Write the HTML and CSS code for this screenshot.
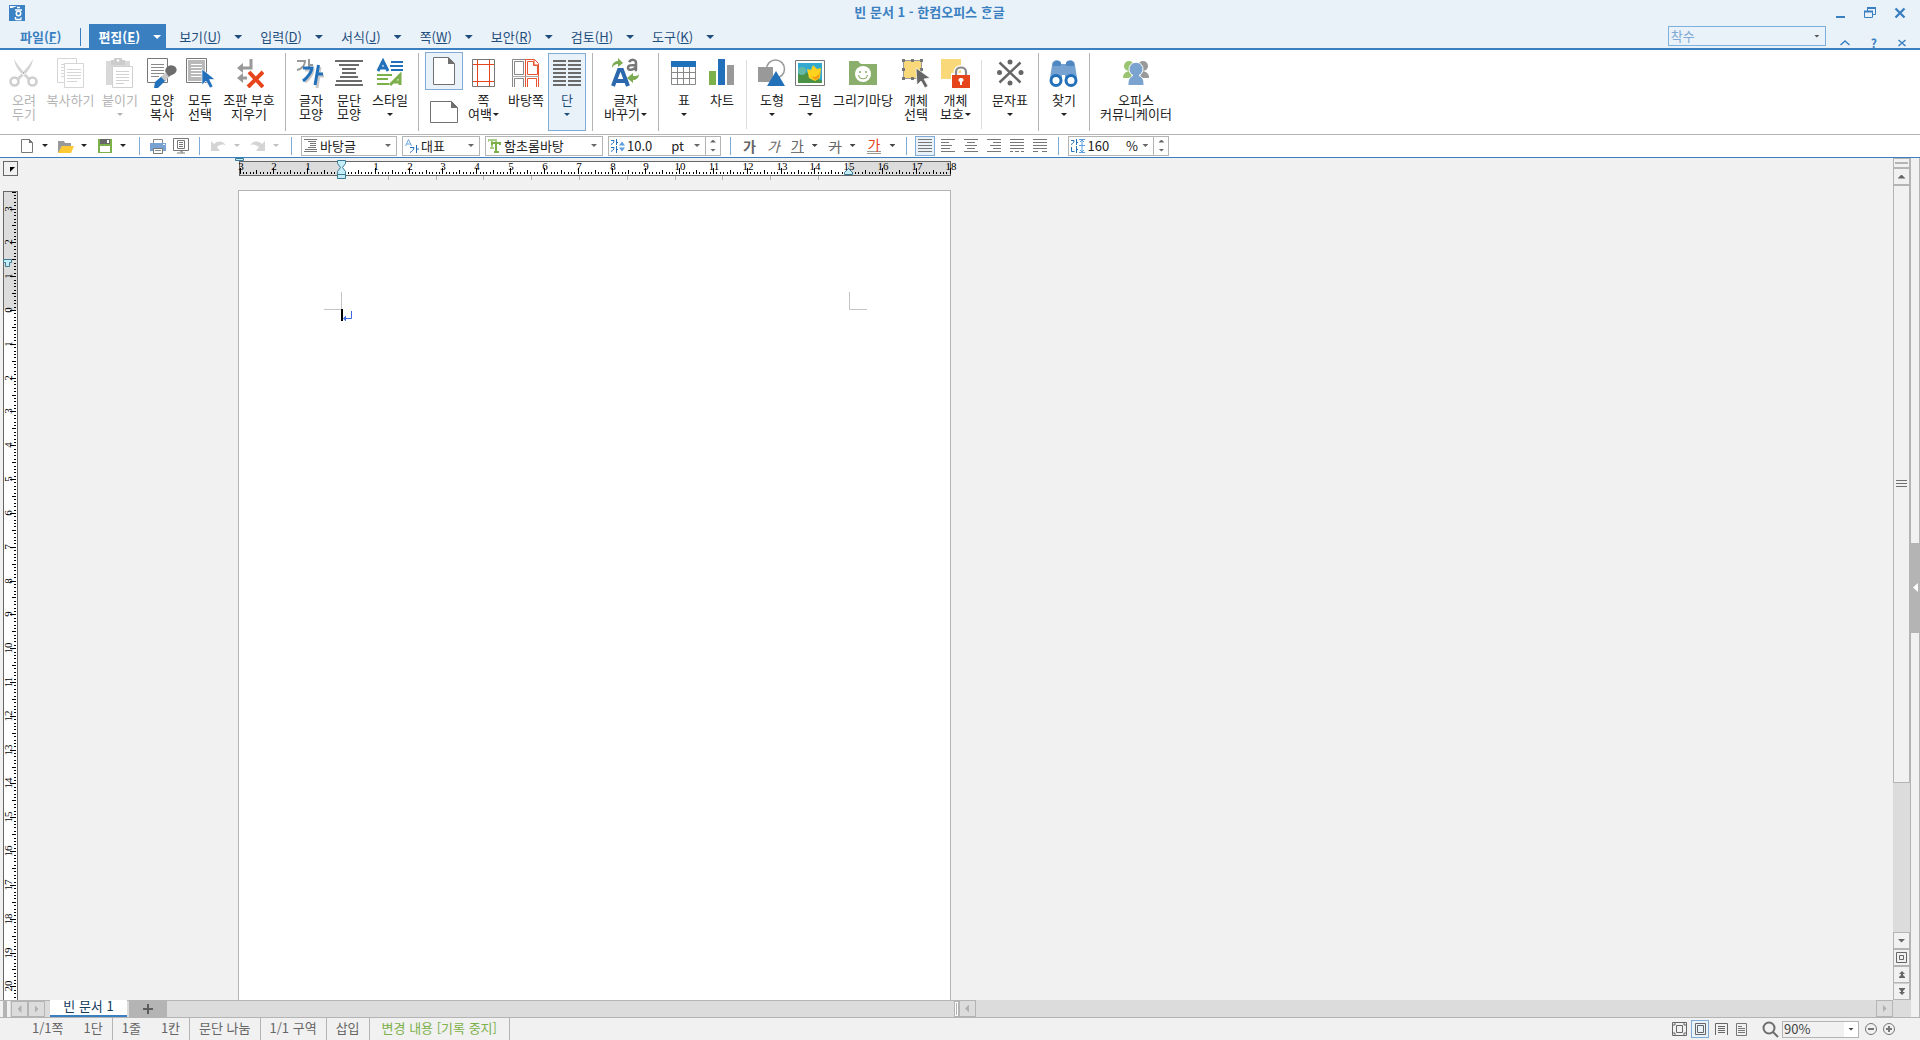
FILE: index.html
```html
<!DOCTYPE html>
<html lang="ko">
<head>
    <meta charset="UTF-8">
    <meta name="viewport" content="width=device-width, initial-scale=1.0">
    <title>빈 문서 1 - 한컴오피스 ᄒᆞᆫ글</title>
    <link rel="stylesheet" href="styles.css">
</head>
<body>

<header class="titlebar">
    <svg class="logo" width="16" height="16" viewBox="0 0 16 16">
        <rect width="16" height="16" fill="#3b82c4"/>
        <path d="M1 1h7l-5 2H1z" fill="#fff"/>
        <path d="M8 2.500h3M6 5h7M6.500 14.500h6M6.500 12v2.500" stroke="#fff" stroke-width="1.500" fill="none"/>
        <circle cx="9.500" cy="8.500" r="2.200" stroke="#fff" stroke-width="1.500" fill="none"/>
        <path d="M12 12v2" stroke="#fff"/>
    </svg>
    <h1>빈 문서 1 - 한컴오피스 ᄒᆞᆫ글</h1>
    <div class="window-buttons">
        <button type="button" aria-label="최소화"><svg width="12" height="12"><path d="M2 10h9" stroke="#3a80c1" stroke-width="2"/></svg></button>
        <button type="button" aria-label="이전 크기로"><svg width="12" height="12" fill="none" stroke="#3a80c1"><path d="M3.500 4V1.500h8v6H9"/><path d="M3 1h9" stroke-width="2"/><path d="M.5 4.500h8v6h-8z"/><path d="M0 4.500h9" stroke-width="2"/></svg></button>
        <button type="button" aria-label="닫기"><svg width="12" height="12"><path d="M1.500 1.500l9 9M10.500 1.500l-9 9" stroke="#3a80c1" stroke-width="2.400"/></svg></button>
    </div>
</header>

<nav class="menubar">
    <button type="button" class="file">파일(<u>F</u>)</button>
    <button type="button" class="menu active">편집(<u>E</u>)<i class="arrow big"></i></button>
    <button type="button" class="menu">보기(<u>U</u>)<i class="arrow big"></i></button>
    <button type="button" class="menu">입력(<u>D</u>)<i class="arrow big"></i></button>
    <button type="button" class="menu">서식(<u>J</u>)<i class="arrow big"></i></button>
    <button type="button" class="menu">쪽(<u>W</u>)<i class="arrow big"></i></button>
    <button type="button" class="menu">보안(<u>R</u>)<i class="arrow big"></i></button>
    <button type="button" class="menu">검토(<u>H</u>)<i class="arrow big"></i></button>
    <button type="button" class="menu">도구(<u>K</u>)<i class="arrow big"></i></button>
    <div class="find">
        <input type="text" placeholder="착수" aria-label="찾을 내용">
        <i class="arrow"></i>
    </div>
    <div class="help-buttons">
        <button type="button" aria-label="메뉴 접기"><svg width="12" height="10"><path d="M1.500 7L6 3l4.500 4" stroke="#3a80c1" stroke-width="1.500" fill="none"/></svg></button>
        <button type="button" aria-label="도움말">?</button>
        <button type="button" aria-label="문서 닫기"><svg width="10" height="10"><path d="M1.500 2l7 6M8.500 2l-7 6" stroke="#3a80c1" stroke-width="1.500"/></svg></button>
    </div>
</nav>

<div class="ribbon">
    <button type="button" class="tool w40" disabled>
        <svg width="30" height="30" viewBox="0 0 30 30"><path d="M5 1c1 7 4 11 9 16l5 5 2-2-5-5C11 10 8 6 5 1zM24 1c-1 7-4 11-9 16l-5 5-2-2 5-5c5-5 8-9 11-14z" fill="#d4d4d4"/><circle cx="5.500" cy="23.500" r="4" fill="none" stroke="#cfcfcf" stroke-width="2.600"/><circle cx="23.500" cy="23.500" r="4" fill="none" stroke="#cfcfcf" stroke-width="2.600"/><circle cx="14.500" cy="15" r="1" fill="#aaa"/></svg>
        <span>오려<br>두기</span>
    </button>
    <button type="button" class="tool w53" disabled>
        <svg width="30" height="30" viewBox="0 0 30 30" fill="#fff" stroke="#d6d6d6"><path d="M1.500.5h19v24h-19z"/><path d="M5 6.500h4M5 9.500h4M5 12.500h4M5 15.500h4M5 18.500h4"/><path d="M8.500 5.500h19v24h-19z"/><path d="M11 11.500h14M11 14.500h14M11 17.500h14M11 20.500h14M11 23.500h10"/></svg>
        <span>복사하기</span>
    </button>
    <button type="button" class="tool w46" disabled>
        <svg width="30" height="30" viewBox="0 0 30 30"><path d="M1 3h24v24H1z" fill="#d9d9d9"/><path d="M6 2h3a4 4 0 0 1 8 0h3v5H6z" fill="#ccc"/><circle cx="13" cy="2.500" r="1.200" fill="#fff"/><path d="M7.500 8.500h20v21h-20z" fill="#fff" stroke="#d0d0d0"/><path d="M11 13.500h13M11 16.500h13M11 19.500h13M11 22.500h13M11 25.500h8" stroke="#d0d0d0"/></svg>
        <span>붙이기</span><i class="arrow"></i>
    </button>
    <button type="button" class="tool w38">
        <svg width="30" height="30" viewBox="0 0 30 30"><path d="M.5.5h20v24H.5z" fill="#fff" stroke="#777"/><path d="M4 6.500h13M4 9.500h13M4 12.500h13M4 15.500h13M4 18.500h8" stroke="#8a8a8a"/><path d="M7 30l1-6 7-6 4 4-8 8z" fill="#2270ba"/><path d="M14 19l5-5 4 4-5 5z" fill="#c8c8c8"/><path d="M18 13c1-5 5-7 9-5s3 6 0 8-4 1-5 3z" fill="#6d6d6d"/></svg>
        <span>모양<br>복사</span>
    </button>
    <button type="button" class="tool w38">
        <svg width="30" height="30" viewBox="0 0 30 30"><path d="M1.500.5h20v24h-20z" fill="#fff" stroke="#777"/><path d="M3 2h17v21H3z" fill="#b9b9b9"/><path d="M6 6.500h11M6 9.500h11M6 12.500h11M6 15.500h11M6 18.500h10" stroke="#fff"/><path d="M17 11v16l4-4 4 7 3-1.500-3.500-7h5.500z" fill="#2270ba" stroke="#fff" stroke-width=".6"/></svg>
        <span>모두<br>선택</span>
    </button>
    <button type="button" class="tool w60">
        <svg width="30" height="30" viewBox="0 0 30 30" fill="none"><path d="M17 1v9H7M7 20h6" stroke="#999" stroke-width="3"/><path d="M9 5v10l-6-5zM9 15v10l-6-5z" fill="#999"/><path d="M15 14l14 15M29 14L14 29" stroke="#e6451c" stroke-width="4"/></svg>
        <span>조판 부호<br>지우기</span>
    </button>
    <div class="split"></div>
    <button type="button" class="tool w38">
        <svg width="30" height="30" viewBox="0 0 30 30" fill="none"><path d="M1 3h8c0 4-3 8-8 9M13 1v12M13 7h4" stroke="#999" stroke-width="2"/><g stroke="#c9c9c9" stroke-width="3"><path d="M9 12h8c-1 6-4 9-8 12M24 9l-3 21M22 18h6"/></g><g stroke="#2270ba" stroke-width="3"><path d="M7 10h9c-1 6-4 9-9 13M22.500 7l-3.500 20M21 16h6"/></g></svg>
        <span>글자<br>모양</span>
    </button>
    <button type="button" class="tool w38">
        <svg width="30" height="30" viewBox="0 0 30 30" stroke="#6b6b6b" stroke-width="2"><path d="M1 3h28M5 7h20M8 11h14M8 15h14M6 19h18M2 23h26M1 27h28"/></svg>
        <span>문단<br>모양</span>
    </button>
    <button type="button" class="tool w44">
        <svg width="30" height="30" viewBox="0 0 30 30" fill="none"><g stroke="#2270ba"><path d="M3 13L8 3l5 10M5 10h7" stroke-width="3"/><path d="M16 4h12M15 8h13M16 12h12" stroke-width="2"/></g><g stroke="#7cb04a"><path d="M2 17h15M2 21h11M2 26h12" stroke-width="2"/><path d="M15 27l10-10v10M18 24h7" stroke-width="3"/></g></svg>
        <span>스타일</span><i class="arrow"></i>
    </button>
    <div class="split"></div>
    <div class="orientation">
        <button type="button" class="portrait" aria-label="세로"><svg width="22" height="28"><path d="M.5.5h15l6 6v21H.5z" fill="#fff" stroke="#707070"/><path d="M15 0v7h7z" fill="#707070"/></svg></button>
        <button type="button" class="landscape" aria-label="가로"><svg width="28" height="22"><path d="M.5.5h21l6 6v15H.5z" fill="#fff" stroke="#707070"/><path d="M21 0v7h7z" fill="#707070"/></svg></button>
    </div>
    <button type="button" class="tool w41">
        <svg width="30" height="30" viewBox="0 0 30 30" fill="none"><path d="M3.500 1.500h22v27h-22z" stroke="#777"/><path d="M8.500 2v26M20.500 2v26M4 6.500h21M4 23.500h21" stroke="#e6451c"/></svg>
        <span>쪽<br>여백<i class="arrow"></i></span>
    </button>
    <button type="button" class="tool w44">
        <svg width="30" height="30" viewBox="0 0 30 30" fill="none"><path d="M1.500 29V1.500h13V29M3.500 3.500h9v13h-9zM3.500 29v-8.500h9V29" stroke="#888"/><path d="M14.500 29V1.500h9l4 4V29M16.500 3.500h6v4h4v9h-10zM16.500 29v-8.500h9V29M23 2v5h5" stroke="#e6552f"/><path d="M1 18.500h27" stroke="#aaa"/></svg>
        <span>바탕쪽</span>
    </button>
    <button type="button" class="tool w38 on">
        <svg width="30" height="30" viewBox="0 0 30 30" stroke="#6b6b6b" stroke-width="2"><path d="M1 3h13M1 7h13M1 11h13M1 15h13M1 19h13M1 23h13M1 27h13M16 3h13M16 7h13M16 11h13M16 15h13M16 19h13M16 23h13M16 27h13"/></svg>
        <span>단</span><i class="arrow"></i>
    </button>
    <div class="split"></div>
    <button type="button" class="tool w53">
        <svg width="30" height="30" viewBox="0 0 30 30" fill="none"><path d="M2 28l6-16h3l6 16M5 23h9" stroke="#2b68ad" stroke-width="4"/><path d="M1 10c0-5 3-7 6-7V0l5 5-5 4V6C4 6 3 7 1 10zM28 16c0 4-3 6-6 6v3l-6-5 6-5v3c3 0 5 0 6-2z" fill="#7caa50"/><path d="M18 4c2-3 7-3 7 1v7h1M25 7c-5 0-8 0-8 3s6 2 8-1" stroke="#777" stroke-width="2.500"/></svg>
        <span>글자<br>바꾸기<i class="arrow"></i></span>
    </button>
    <div class="split"></div>
    <button type="button" class="tool w38">
        <svg width="30" height="30" viewBox="0 0 30 30" fill="none"><path d="M2.500 8v18.500h24V8M3 14.500h23M3 20.500h23M8.500 9v17M14.500 9v17M20.500 9v17" stroke="#888"/><path d="M2 3h25v6H2z" fill="#2270ba"/></svg>
        <span>표</span><i class="arrow"></i>
    </button>
    <button type="button" class="tool w38">
        <svg width="30" height="30" viewBox="0 0 30 30"><path d="M2 13h7v14H2z" fill="#7cb04a"/><path d="M11 1h7v26h-7z" fill="#2270ba"/><path d="M20 7h7v20h-7z" fill="#999"/></svg>
        <span>차트</span>
    </button>
    <div class="split light"></div>
    <button type="button" class="tool w38">
        <svg width="30" height="30" viewBox="0 0 30 30"><circle cx="18.500" cy="11" r="9" fill="#fff" stroke="#999" stroke-width="1.500"/><path d="M1 9h15v15H1z" fill="#999"/><path d="M19 13l9 15H10z" fill="#2270ba"/></svg>
        <span>도형</span><i class="arrow"></i>
    </button>
    <button type="button" class="tool w38">
        <svg width="30" height="30" viewBox="0 0 30 30"><path d="M.5 2.500h29v25H.5z" fill="#fff" stroke="#777"/><path d="M3 5h24v20H3z" fill="#31a9cf"/><path d="M3 16l6-3 18 10v2H3z" fill="#4b9146"/><circle cx="7" cy="13" r="4" fill="#62b9a5"/><path d="M12 11l4 1 2-5 4 4 4-1-1 10-5 3-6-3z" fill="#ffd21e"/><path d="M16 18c3 2 7 1 9-4l-1 6-4 2z" fill="#f39b13"/></svg>
        <span>그림</span><i class="arrow"></i>
    </button>
    <button type="button" class="tool w68">
        <svg width="30" height="30" viewBox="0 0 30 30"><path d="M1 3h9l3 3h16v21H1z" fill="#8aae6c"/><circle cx="15" cy="16" r="8" fill="#fff"/><circle cx="12" cy="14" r="1" fill="#8aae6c"/><circle cx="18" cy="14" r="1" fill="#8aae6c"/><path d="M10.500 17c1 5 8 5 9 0" fill="none" stroke="#8aae6c" stroke-width="1.200"/></svg>
        <span>그리기마당</span>
    </button>
    <button type="button" class="tool w38">
        <svg width="30" height="30" viewBox="0 0 30 30"><path d="M2.500 2.500h18v18h-18z" fill="#f8d878" stroke="#999"/><path d="M1 1h3v3H1zM10 1h3v3h-3zM19 1h3v3h-3zM1 10h3v3H1zM1 19h3v3H1zM10 19h3v3h-3zM19 10h3v3h-3z" fill="#777"/><path d="M15 10l14 10-6 1 4 7-3 2-4-7-4 4z" fill="#666" stroke="#fff" stroke-width=".7"/></svg>
        <span>개체<br>선택</span>
    </button>
    <button type="button" class="tool w41">
        <svg width="30" height="30" viewBox="0 0 30 30"><path d="M0 1h20v20H0z" fill="#f8d878"/><path d="M10 15h20v15H10z" fill="#fff"/><path d="M15 17v-3c0-6 10-6 10 0v3" fill="none" stroke="#fff" stroke-width="5"/><path d="M15 17v-3c0-6 10-6 10 0v3" fill="none" stroke="#888" stroke-width="2.200"/><path d="M11 17h18v13H11z" fill="#e6451c"/><path d="M20 20a2 2 0 0 1 1 4v3h-2v-3a2 2 0 0 1 1-4z" fill="#fff"/></svg>
        <span>개체<br>보호<i class="arrow"></i></span>
    </button>
    <div class="split light"></div>
    <button type="button" class="tool w44">
        <svg width="30" height="30" viewBox="0 0 30 30"><path d="M4.500 4.500l21 20M25.500 4.500l-21 20" stroke="#666" stroke-width="2.500"/><g fill="#666"><circle cx="15" cy="4" r="2.500"/><circle cx="15" cy="25" r="2.500"/><circle cx="4.500" cy="14.500" r="2.500"/><circle cx="26" cy="14.500" r="2.500"/></g></svg>
        <span>문자표</span><i class="arrow"></i>
    </button>
    <div class="split"></div>
    <button type="button" class="tool w38">
        <svg width="30" height="30" viewBox="0 0 30 30"><path d="M3 7c0-6 9-6 9-1h5c0-5 9-5 9 1l2 13H16v-3h-3v3H1z" fill="#75a2d1"/><path d="M4 6c1-4 7-4 8-1v3H4zM17 5c1-3 7-3 8 1v2h-8z" fill="#4f87c2"/><circle cx="7" cy="22.500" r="5" fill="#fff" stroke="#2270ba" stroke-width="3"/><circle cx="22" cy="22.500" r="5" fill="#fff" stroke="#2270ba" stroke-width="3"/></svg>
        <span>찾기</span><i class="arrow"></i>
    </button>
    <div class="split"></div>
    <button type="button" class="tool w80">
        <svg width="30" height="30" viewBox="0 0 30 30"><g fill="#9ac472"><circle cx="8" cy="8" r="5"/><path d="M2 20c0-4 2-6 6-7l4 7z"/></g><g fill="#999"><circle cx="22" cy="8" r="5"/><path d="M28 20c0-4-2-6-6-7l-4 7z"/></g><g fill="#7aa3d0" stroke="#fff"><path d="M7 27.500c0-6 1-8 5-10a7 7 0 1 1 6 0c4 2 5 4 5 10z"/></g></svg>
        <span>오피스<br>커뮤니케이터</span>
    </button>
</div>

<div class="toolbar">
    <div class="group files">
        <button type="button" aria-label="새 문서"><svg width="16" height="16"><path d="M2.500 1.500h8l3 3v10h-11z" fill="#fff" stroke="#777"/><path d="M10 1v4h4z" fill="#777"/></svg><i class="arrow"></i></button>
        <button type="button" aria-label="불러오기"><svg width="16" height="16"><path d="M0 3h6l1 2h6v3H4l-3 7H0z" fill="#999"/><path d="M4 8h12l-3 7H0z" fill="#ffc933"/></svg><i class="arrow"></i></button>
        <button type="button" aria-label="저장하기"><svg width="16" height="16"><path d="M1 1h14v14H1z" fill="#7cb04a"/><path d="M3 1h10v5H3z" fill="#666"/><path d="M10 2h2v3h-2zM3 8h10v6H3z" fill="#fff"/></svg><i class="arrow"></i></button>
    </div>
    <div class="bar"></div>
    <div class="group print">
        <button type="button" aria-label="인쇄"><svg width="16" height="16"><path d="M3.500 1.500h9V6h-9z" fill="#fff" stroke="#888"/><path d="M0 5h16v8H0z" fill="#77a3d2"/><path d="M3.500 10.500h9v5h-9z" fill="#fff" stroke="#777"/><path d="M5 12.500h6" stroke="#888"/><path d="M13 6h2v1h-2z" fill="#fff"/></svg></button>
        <button type="button" aria-label="미리 보기"><svg width="16" height="16" fill="none" stroke="#777"><path d="M.5.5h15v12H.5z"/><path d="M4.500 2.500h7v8h-7zM6 4.500h4M6 6.500h4M6 8.500h4M4 15h8M7 13h2v2" /></svg></button>
    </div>
    <div class="bar"></div>
    <div class="group undo">
        <button type="button" aria-label="되돌리기" disabled><svg width="16" height="16"><path d="M0 3v10h9L6 9c4-3 7-3 9-1-2-5-8-6-12-2z" fill="#d4d4d4"/></svg><i class="arrow"></i></button>
        <button type="button" aria-label="다시 실행" disabled><svg width="16" height="16"><path d="M15 3v10H6l3-4C5 6 2 6 0 8c2-5 8-6 12-2z" fill="#d4d4d4"/></svg><i class="arrow"></i></button>
    </div>
    <div class="bar"></div>
    <div class="combos">
        <div class="combo style">
            <svg width="14" height="14" stroke="#777"><path d="M0 .5h13M4 2.500h8M6 4.500h6M6 6.500h6M4 8.500h8M1 10.500h12M0 12.500h13"/></svg>
            <select aria-label="스타일"><option>바탕글</option></select><i class="arrow"></i>
        </div>
        <div class="combo lang">
            <svg width="14" height="14" fill="none"><path d="M.5 7L3.500.5 6.500 7M1.500 5h4" stroke="#6fa6e0"/><path d="M5 8.500h4c0 2-2 4-4 5M11.500 6v8M12 10h2" stroke="#2270ba"/></svg>
            <select aria-label="언어"><option>대표</option></select><i class="arrow"></i>
        </div>
        <div class="combo font">
            <svg width="14" height="14" fill="none"><path d="M0 3V1h8v2M4 1v8M2 9h4" stroke="#a9cf87" stroke-width="2"/><path d="M4 6V4h8v2M8 4v9M6 13h5" stroke="#7cb04a" stroke-width="2"/></svg>
            <select aria-label="글꼴"><option>함초롬바탕</option></select><i class="arrow"></i>
        </div>
        <div class="combo size">
            <svg width="14" height="14" fill="none" stroke="#2270ba"><path d="M0 1.500h3c0 2-1 3-3 4M5.500 0v6M0 8.500h3c0 2-1 3-3 4M5.500 7v7M6 3.500h1M6 10.500h1"/><path d="M8 6.500l3-4 3 4zM8 8.500l3 4 3-4z" fill="#5d9ddd" stroke="none"/></svg>
            <input type="text" value="10.0" aria-label="글자 크기"><span>pt</span><i class="arrow"></i>
            <div class="spin"><button type="button" aria-label="크게"><i class="arrow up"></i></button><button type="button" aria-label="작게"><i class="arrow"></i></button></div>
        </div>
    </div>
    <div class="bar"></div>
    <div class="group letters">
        <button type="button" class="bold">가</button>
        <button type="button" class="italic">가</button>
        <button type="button" class="under"><span>가</span><i class="arrow"></i></button>
        <button type="button" class="strike"><span>가</span><i class="arrow"></i></button>
        <button type="button" class="color"><span>가</span><i class="arrow"></i></button>
    </div>
    <div class="bar"></div>
    <div class="aligns">
        <button type="button" class="on" aria-label="양쪽 정렬"><svg width="14" height="14" stroke="#777"><path d="M0 .5h14M0 3.500h14M0 6.500h14M0 9.500h14M0 12.500h14"/></svg></button>
        <button type="button" aria-label="왼쪽 정렬"><svg width="14" height="14" stroke="#777"><path d="M0 .5h14M0 3.500h8M0 6.500h11M0 9.500h9M0 12.500h14"/></svg></button>
        <button type="button" aria-label="가운데 정렬"><svg width="14" height="14" stroke="#777"><path d="M0 .5h14M3 3.500h8M1 6.500h12M3 9.500h8M0 12.500h14"/></svg></button>
        <button type="button" aria-label="오른쪽 정렬"><svg width="14" height="14" stroke="#777"><path d="M0 .5h14M6 3.500h8M3 6.500h11M6 9.500h8M0 12.500h14"/></svg></button>
        <button type="button" aria-label="배분 정렬"><svg width="14" height="14" stroke="#777"><path d="M0 .5h14M0 3.500h14M0 6.500h14M0 9.500h14M0 12.500h3M5 12.500h4M11 12.500h3"/></svg></button>
        <button type="button" aria-label="나눔 정렬"><svg width="14" height="14" stroke="#777"><path d="M0 .5h14M0 3.500h14M0 6.500h14M0 9.500h14M0 12.500h5M9 12.500h5"/></svg></button>
    </div>
    <div class="bar"></div>
    <div class="combo spacing">
        <svg width="14" height="14" fill="none" stroke="#2270ba"><path d="M0 1.500h3c0 2-1 3-3 4M5.500 0v6M.5 8v4.500h3M5.500 7v7M6 3.500h1M6 10.500h1"/><path d="M8 .5h6M8 6.500h6M8 13.500h6M11 1v12M9 3l2-2 2 2M9 11l2 2 2-2" stroke="#5d9ddd"/></svg>
        <input type="text" value="160" aria-label="줄 간격"><span>%</span><i class="arrow"></i>
        <div class="spin"><button type="button" aria-label="넓게"><i class="arrow up"></i></button><button type="button" aria-label="좁게"><i class="arrow"></i></button></div>
    </div>
</div>

<div class="workspace">
    <div class="left">
        <div class="view">
            <main class="editor">
                <button type="button" class="tab-kind" aria-label="탭 종류"><svg width="5" height="5"><path d="M0 0h5L0 5z"/></svg></button>
                <svg id="hruler" class="hruler" width="730" height="32"></svg>
                <svg id="vruler" class="vruler" width="18"></svg>
                <div class="canvas">
                    <article class="page">
                        <div class="corners">
                            <svg width="18" height="18"><path d="M17.500 0v17.500H0" fill="none" stroke="#c4c4c4"/></svg>
                            <svg width="18" height="18"><path d="M.5 0v17.500H18" fill="none" stroke="#c4c4c4"/></svg>
                        </div>
                        <svg class="caret" width="12" height="12"><path d="M0 0h2v12H0z"/><path d="M10.500 2v7.500H4" fill="none" stroke="#4169e1"/><path d="M2 9.500l3-3v6z" fill="#4169e1"/></svg>
                    </article>
                </div>
            </main>
            <div class="vscroll">
                <button type="button" class="splitter" aria-label="편집 화면 나누기"></button>
                <button type="button" aria-label="위로"><i class="arrow big up"></i></button>
                <div class="thumb"><svg width="11" height="8" stroke="#707070"><path d="M0 .5h11M0 3.500h11M0 6.500h11"/></svg></div>
                <div class="track"></div>
                <button type="button" aria-label="아래로"><i class="arrow big"></i></button>
                <button type="button" aria-label="쪽 찾아가기"><svg width="11" height="11" fill="none" stroke="#666"><path d="M.5.5h10v10H.5zM3.500 3.500h4v4h-4z"/></svg></button>
                <button type="button" aria-label="이전 쪽"><svg width="6" height="7" fill="#666"><path d="M3 0l3 3H4v1l2 2v1H0V6l2-2V3H0z"/></svg></button>
                <button type="button" class="last" aria-label="다음 쪽"><svg width="6" height="7" fill="#666"><path d="M3 7L0 4h2V3L0 1V0h6v1L4 3v1h2z"/></svg></button>
            </div>
        </div>
        <div class="bottom">
            <div class="sheets">
                <div class="grip wide"></div>
                <button type="button" class="step" aria-label="이전 탭"><i class="tri-left"></i></button>
                <button type="button" class="step" aria-label="다음 탭"><i class="tri-right"></i></button>
                <button type="button" class="sheet">빈 문서 1</button>
                <button type="button" class="add" aria-label="새 탭"><svg width="10" height="10"><path d="M5 0v10M0 5h10" stroke="#5c5c5c" stroke-width="2"/></svg></button>
                <div class="grip"></div>
            </div>
            <div class="hscroll">
                <button type="button" class="step" aria-label="왼쪽으로"><i class="tri-left"></i></button>
                <button type="button" class="step" aria-label="오른쪽으로"><i class="tri-right"></i></button>
            </div>
        </div>
    </div>
    <aside class="panel">
        <button type="button" aria-label="작업 창 열기"><svg width="5" height="9"><path d="M5 0v9L0 4.500z" fill="#fff"/></svg></button>
    </aside>
</div>

<footer class="status">
    <ul>
        <li><span>1/1쪽</span><span>1단</span></li>
        <li><span>1줄</span><span>1칸</span></li>
        <li>문단 나눔</li>
        <li>1/1 구역</li>
        <li>삽입</li>
        <li class="track-changes">변경 내용 [기록 중지]</li>
    </ul>
    <div class="views">
        <button type="button" aria-label="전체 화면"><svg width="15" height="14" fill="none" stroke="#666"><path d="M.5.5h14v13H.5zM4.500 3.500h6v7h-6zM2 4V2h2M11 2h2v2M13 10v2h-2M4 12H2v-2"/></svg></button>
        <button type="button" class="on" aria-label="쪽 윤곽"><svg width="11" height="12" fill="none" stroke="#666"><path d="M.5.5h10v11H.5zM2.500 2.500h6v7h-6z"/></svg></button>
        <button type="button" aria-label="폭 맞춤"><svg width="13" height="12" fill="none" stroke="#666"><path d="M.5 12V.5h12V12M3 3.500h7M3 5.500h7M3 7.500h7M3 9.500h7"/></svg></button>
        <button type="button" aria-label="쪽 맞춤"><svg width="12" height="13" fill="none" stroke="#777"><path d="M.5.5h10v12H.5zM2 3.500h4M2 5.500h7M2 7.500h7M2 9.500h7"/></svg></button>
    </div>
    <svg class="lens" width="17" height="17" fill="none"><circle cx="7" cy="7" r="5.500" stroke="#6d6d6d" stroke-width="2"/><path d="M11 11l5 5" stroke="#6d6d6d" stroke-width="2"/></svg>
    <div class="zoom">
        <select aria-label="배율"><option>90%</option></select>
        <i class="arrow"></i>
    </div>
    <button type="button" aria-label="축소"><svg width="12" height="12" fill="none" stroke="#777"><circle cx="6" cy="6" r="5.500"/><path d="M3 6h6" stroke-width="2"/></svg></button>
    <button type="button" aria-label="확대"><svg width="12" height="12" fill="none" stroke="#777"><circle cx="6" cy="6" r="5.500"/><path d="M3 6h6M6 3v6" stroke-width="2"/></svg></button>
</footer>

<script src="ruler.js"></script>
</body>
</html>
```

FILE: ruler.js
```js
// pixels per millimetre at 90%
const MM = 3.382;

function tickSize(mm) {
    if (mm % 10 === 0) return 6;
    return mm % 5 === 0 ? 4 : 2;
}

function drawHorizontal() {
    const zero = 111;
    let ticks = '';
    let labels = '';
    for (let mm = -30; mm <= 180; mm++) {
        const x = Math.round(zero + mm * MM);
        ticks += `M${x + 0.5} 16v-${tickSize(mm)}`;
        if (mm % 10 === 0 && mm !== 0) {
            labels += `<text x="${x + 1}" y="12">${Math.abs(mm / 10)}</text>`;
        }
    }
    let tabs = '';
    for (let i = 1; i <= 10; i++) {
        tabs += `M${Math.round(zero - 1 + i * 47.8) + 0.5} 18v4`;
    }
    document.getElementById('hruler').innerHTML = `
        <rect x="9.5" y="3.5" width="711" height="14" class="outside"/>
        <rect x="111" y="4" width="507" height="13" fill="#fff"/>
        <path d="${ticks}" stroke="#000"/>
        <path d="${tabs}" stroke="#b4b4b4"/>
        ${labels}
        <path class="marker" d="M5.5 .5h8v2h-8z"/>
        <path class="marker" d="M107.500 2.500h8v3l-3 4 3 4v7h-8v-7l3-4-3-4zM107.500 16.500h8"/>
        <path class="marker" d="M614.500 16.500v-2l4-4 4 4v2z"/>`;
}

function drawVertical() {
    const zero = 120;
    const ruler = document.getElementById('vruler');
    const height = ruler.getBoundingClientRect().height;
    let ticks = '';
    let labels = '';
    for (let mm = -35; zero + mm * MM < height; mm++) {
        const y = Math.round(zero + mm * MM);
        ticks += `M16 ${y + 0.5}h-${tickSize(mm)}`;
        if (mm % 10 === 0 && y < height - 6) {
            labels += `<text transform="translate(12 ${y}) rotate(-90)">${Math.abs(mm / 10)}</text>`;
        }
    }
    ruler.innerHTML = `
        <rect x="3.5" y="1.5" width="14" height="${height}" fill="#fff" stroke="#666"/>
        <rect x="4" y="2" width="13" height="118" fill="#dcdcdc"/>
        <path d="${ticks}" stroke="#000"/>
        ${labels}
        <path class="marker" d="M3.5 69.500h8v3h-2v4h-4v-4h-2z"/>`;
}

drawHorizontal();
drawVertical();
window.addEventListener('resize', drawVertical);
```

FILE: styles.css
```css
* {
    box-sizing: border-box;
}
body {
    margin: 0;
    height: 100vh;
    display: flex;
    flex-direction: column;
    overflow: hidden;
    background: #f1f1f1;
    color: #222;
    font-family: "Noto Sans CJK KR", sans-serif;
    font-size: 13px;
    line-height: 14px;
}
button, input, select {
    font: inherit;
    color: inherit;
    background: none;
    border: none;
    border-radius: 0;
    padding: 0;
    margin: 0;
    outline: none;
    appearance: none;
}
button {
    display: flex;
    align-items: center;
    justify-content: center;
    white-space: nowrap;
}
svg {
    display: block;
    flex: none;
}

/* drop-down triangles */
.arrow {
    flex: none;
    width: 6px;
    height: 3px;
    background: currentColor;
    clip-path: polygon(0 0, 100% 0, 50% 100%);
}
.arrow.big {
    width: 8px;
    height: 4px;
}
.arrow.up {
    clip-path: polygon(50% 0, 100% 100%, 0 100%);
}
.tri-left, .tri-right {
    width: 4px;
    height: 8px;
    background: #b0b0b0;
    clip-path: polygon(100% 0, 100% 100%, 0 50%);
}
.tri-right {
    clip-path: polygon(0 0, 100% 50%, 0 100%);
}

/* title */
.titlebar {
    flex: none;
    display: flex;
    align-items: center;
    height: 24px;
    padding: 2px 14px 0 9px;
    background: #eaf2f9;
    color: #3a80c1;
}
.titlebar h1 {
    flex: 1;
    margin: 0;
    padding-bottom: 2px;
    font-size: 13px;
    font-weight: bold;
    text-align: center;
}
.window-buttons {
    display: flex;
    gap: 18px;
}

/* menu */
.menubar {
    flex: none;
    display: flex;
    height: 26px;
    background: #eaf2f9;
    border-bottom: 2px solid #3a80c1;
    color: #1f4e7c;
}
.file {
    height: 18px;
    margin: 4px 8px 0 0;
    padding: 0 19px 0 20px;
    border-right: 1px solid #3a80c1;
    color: #3a80c1;
    font-weight: bold;
}
.menu {
    padding: 2px 5px 0 9px;
    margin-right: 4px;
}
.menu .arrow {
    margin-left: 13px;
}
.menu.active {
    background: #3a80c1;
    color: #fff;
    font-weight: bold;
}
.find {
    display: flex;
    align-items: center;
    width: 158px;
    height: 20px;
    margin: 2px 13px 0 auto;
    padding: 0 5px 0 2px;
    border: 1px solid #7fb0dd;
}
.find input {
    flex: 1;
    min-width: 0;
}
.find input::placeholder {
    color: #7fa9d4;
}
.find .arrow {
    color: #555;
}
.help-buttons {
    display: flex;
    align-items: flex-end;
    gap: 20px;
    padding: 0 13px 0 0;
    color: #3a80c1;
    font-weight: bold;
    font-size: 12px;
    line-height: 10px;
}

/* ribbon */
.ribbon {
    flex: none;
    display: flex;
    height: 85px;
    padding: 3px 4px;
    background: #fff;
    border-bottom: 1px solid #b4b4b4;
}
.tool {
    flex: none;
    flex-direction: column;
    justify-content: flex-start;
    height: 78px;
    padding-top: 4px;
    border: 1px solid transparent;
    text-align: center;
}
.tool > span {
    margin-top: 5px;
}
.tool > .arrow {
    margin-top: 6px;
}
.tool span .arrow {
    display: inline-block;
    margin: 0 0 3px 1px;
}
.tool:disabled {
    color: #b4b4b4;
}
.tool.on, .portrait {
    background: #eaf2f9;
    border: 1px solid #7fabd6;
    color: #1f4e7c;
}
.w38 { width: 38px; }
.w40 { width: 40px; }
.w41 { width: 41px; }
.w44 { width: 44px; }
.w46 { width: 46px; }
.w53 { width: 53px; }
.w60 { width: 60px; }
.w68 { width: 68px; }
.w80 { width: 80px; }
.split {
    flex: none;
    width: 1px;
    height: 78px;
    margin: 0 6px;
    background: #b4b4b4;
}
.split.light {
    height: 69px;
    margin: 7px 6px 0 5px;
    background: #dcdcdc;
}
.orientation {
    display: flex;
    flex-direction: column;
    align-items: center;
    gap: 11px;
}
.portrait {
    width: 38px;
    height: 38px;
    margin-top: -1px;
}

/* format toolbar */
.toolbar {
    flex: none;
    display: flex;
    align-items: center;
    height: 23px;
    padding: 0 20px 1px 19px;
    background: #fff;
    border-bottom: 1px solid #3a80c1;
}
.group {
    display: flex;
}
.group .arrow {
    margin-left: 7px;
}
.files, .undo {
    gap: 10px;
}
.files {
    padding-right: 13px;
}
.print {
    gap: 7px;
    padding: 0 10px;
}
.undo {
    padding: 0 12px 0 11px;
}
.undo button {
    color: #c0c0c0;
}
.bar {
    width: 1px;
    height: 18px;
    background: #7fabd6;
}
.combos {
    display: flex;
    gap: 5px;
    padding: 0 9px;
}
.combo {
    display: flex;
    align-items: center;
    height: 20px;
    padding: 0 5px 0 2px;
    border: 1px solid #b4b4b4;
    background: #fff;
}
.combo select {
    flex: 1;
    min-width: 0;
    padding-left: 2px;
}
.combo input {
    width: 36px;
    padding-left: 2px;
}
.combo > span {
    flex: 1;
    text-align: center;
}
.combo > .arrow {
    color: #666;
}
.style { width: 96px; }
.lang { width: 78px; }
.font { width: 118px; }
.size { width: 113px; }
.size, .spacing {
    padding-right: 0;
}
.spacing {
    width: 101px;
    margin-left: 9px;
}
.spin {
    display: flex;
    flex-direction: column;
    justify-content: space-around;
    align-self: stretch;
    width: 15px;
    margin-left: 5px;
    border-left: 1px solid #b4b4b4;
    color: #666;
}
.letters {
    padding: 0 11px 0 12px;
    gap: 11px;
    font-size: 14px;
    color: #666;
}
.letters .arrow {
    margin-left: 8px;
    color: #444;
}
.bold {
    font-weight: bold;
}
.italic {
    font-style: italic;
}
.under span {
    border-bottom: 1px solid #777;
}
.strike span {
    text-decoration: line-through;
}
.color span {
    padding: 0 1px;
    border-bottom: 3px double #999;
    color: #e6451c;
}
.aligns {
    display: flex;
    gap: 3px;
    padding: 0 8px;
}
.aligns button {
    width: 20px;
    height: 20px;
    border: 1px solid transparent;
}
.aligns .on {
    background: #eaf2f9;
    border-color: #7fabd6;
}

/* document area */
.workspace {
    flex: 1;
    min-height: 0;
    display: flex;
    border-bottom: 1px solid #b4b4b4;
}
.left {
    flex: 1;
    min-width: 0;
    display: flex;
    flex-direction: column;
}
.view {
    flex: 1;
    min-height: 0;
    display: flex;
}
.editor {
    flex: 1;
    min-width: 0;
    display: grid;
    grid-template-columns: 18px 1fr;
    grid-template-rows: 32px 1fr;
}
.tab-kind {
    width: 15px;
    height: 15px;
    margin: 3px 0 0 3px;
    padding: 2px 0 0 3px;
    border: 1px solid #666;
}
.hruler {
    margin-left: 212px;
    overflow: visible;
}
.vruler {
    height: 100%;
    overflow: hidden;
}
.hruler text, .vruler text {
    font-family: "Liberation Serif", serif;
    font-size: 11px;
    text-anchor: middle;
}
.outside {
    fill: #dcdcdc;
    stroke: #666;
}
.marker {
    fill: #c5edf7;
    stroke: #3a7a95;
}
.canvas {
    display: flex;
    padding-left: 220px;
}
.page {
    width: 713px;
    padding: 101px 83px 0 85px;
    background: #fff;
    border: 1px solid #b4b4b4;
    border-bottom: none;
}
.corners {
    display: flex;
    justify-content: space-between;
}
.caret {
    margin: -1px 0 0 17px;
}

/* scroll bars */
.vscroll {
    display: flex;
    flex-direction: column;
    width: 18px;
    border-right: 1px solid #b4b4b4;
    background: #dcdcdc;
}
.vscroll button, .thumb {
    flex: none;
    height: 17px;
    border: 1px solid #b4b4b4;
    background: #f1f1f1;
    color: #666;
}
.vscroll .splitter {
    height: 10px;
}
.splitter::before {
    content: "";
    width: 13px;
    height: 2px;
    background: #b4b4b4;
}
.vscroll .thumb {
    flex: 4;
    display: flex;
    align-items: center;
    justify-content: center;
}
.track {
    flex: 1;
}
.vscroll .last {
    border-top-color: #d0d0d0;
}
.bottom {
    flex: none;
    display: flex;
    height: 17px;
}
.sheets {
    display: flex;
    width: calc(50% + 3px);
    background: #dcdcdc;
    border-top: 1px solid #b4b4b4;
}
.grip {
    width: 5px;
    margin-left: auto;
    background: #b4b4b4;
    border: 1px solid #b4b4b4;
    outline: 1px solid #fff;
    outline-offset: -2px;
}
.grip.wide {
    width: 10px;
    margin: 0 1px 0 0;
    border-width: 0 3px;
    border-color: #f1f1f1;
    outline: none;
}
.step {
    width: 17px;
    border: 1px solid #b4b4b4;
    background: #dcdcdc;
}
.sheet {
    align-items: flex-start;
    width: 77px;
    margin: -1px 2px 0 5px;
    background: #fff;
    border-bottom: 2px solid #3a80c1;
    color: #123c5c;
    line-height: 12px;
}
.add {
    width: 38px;
    background: #b4b4b4;
}
.hscroll {
    flex: 1;
    display: flex;
    justify-content: space-between;
    padding-right: 18px;
    background: #dcdcdc;
}
.panel {
    display: flex;
    align-items: center;
    width: 9px;
    border-right: 1px solid #b4b4b4;
}
.panel button {
    width: 9px;
    height: 90px;
    background: #b4b4b4;
}

/* status */
.status {
    flex: none;
    display: flex;
    align-items: center;
    height: 22px;
    padding-right: 25px;
    color: #666;
}
.status ul {
    display: flex;
    align-items: center;
    align-self: stretch;
    list-style: none;
    margin: 0 auto 0 23px;
    padding: 0;
}
.status li {
    display: flex;
    align-items: center;
    gap: 20px;
    height: 22px;
    padding: 0 9px 2px;
    border-right: 1px solid #b4b4b4;
}
.status .track-changes {
    padding: 0 12px 2px;
    color: #7cb04a;
}
.views {
    display: flex;
    align-items: center;
    gap: 3px;
    margin-right: 11px;
}
.views button {
    width: 18px;
    height: 18px;
}
.views .on {
    background: #eaf2f9;
    border: 1px solid #7fabd6;
}
.lens {
    margin-right: 3px;
}
.zoom {
    display: flex;
    align-items: center;
    width: 77px;
    height: 17px;
    margin-right: 6px;
    padding: 0 4px 0 1px;
    border: 1px solid #b4b4b4;
    background: linear-gradient(to left, #fff 14px, #f1f1f1 14px);
    color: #444;
}
.zoom select {
    flex: 1;
    min-width: 0;
}
.zoom + button {
    margin-right: 6px;
}
```
